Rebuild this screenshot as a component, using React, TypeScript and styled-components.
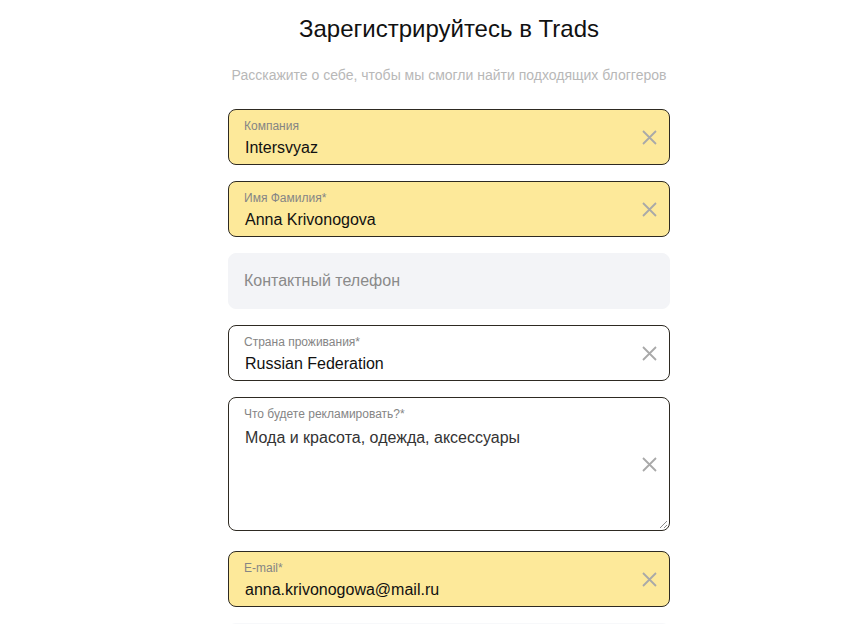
import React from 'react';
import styled, { createGlobalStyle } from 'styled-components';

const GlobalStyle = createGlobalStyle`
  body {
    margin: 0;
    background: #ffffff;
    font-family: 'Liberation Sans', Arial, sans-serif;
  }
`;

const Page = styled.div`
  width: 442px;
  margin-left: 228px;
  padding-top: 15px;
  display: flex;
  flex-direction: column;
  align-items: stretch;
`;

const Title = styled.h1`
  margin: 0;
  font-size: 24px;
  line-height: 28px;
  font-weight: 400;
  color: #111;
  text-align: center;
`;

const Subtitle = styled.p`
  margin: 22px 0 24px;
  font-size: 14px;
  line-height: 20px;
  color: #b8b8b8;
  text-align: center;
`;

const Form = styled.div`
  display: flex;
  flex-direction: column;
  gap: 16px;
`;

const Field = styled.div<{ $filled?: boolean; $empty?: boolean; $tall?: boolean }>`
  position: relative;
  box-sizing: border-box;
  height: ${({ $tall }) => ($tall ? '134px' : '56px')};
  margin-bottom: ${({ $tall }) => ($tall ? '4px' : '0')};
  border-radius: 8px;
  border: 1px solid ${({ $empty }) => ($empty ? '#f3f4f7' : '#2e2a22')};
  background: ${({ $filled, $empty }) =>
    $filled ? '#fde99a' : $empty ? '#f3f4f7' : '#ffffff'};
  padding: 9px 50px 0 15px;
  display: flex;
  flex-direction: column;
  justify-content: ${({ $empty }) => ($empty ? 'center' : 'flex-start')};
`;

const Label = styled.span`
  font-size: 12px;
  line-height: 14px;
  color: #858585;
`;

const Value = styled.span<{ $soft?: boolean; $gap?: number }>`
  margin-top: ${({ $gap }) => $gap ?? 5}px;
  padding-left: 1px;
  font-size: 16px;
  line-height: 20px;
  color: ${({ $soft }) => ($soft ? '#333' : '#111')};
`;

const Placeholder = styled.span`
  margin-top: -9px;
  font-size: 16px;
  line-height: 20px;
  color: #8a8a8a;
`;

const Clear = styled.button`
  position: absolute;
  right: 12px;
  top: 50%;
  transform: translateY(-50%);
  width: 16px;
  height: 16px;
  padding: 0;
  border: none;
  background: none;
  display: flex;
  align-items: center;
  justify-content: center;
  cursor: pointer;
`;

const Grip = styled.svg`
  position: absolute;
  right: 1px;
  bottom: 1px;
`;

const NextField = styled.div`
  margin-top: 16px;
  height: 20px;
  border-radius: 8px 8px 0 0;
  background: #f7f8fa;
`;

const ClearIcon = () => (
  <Clear aria-label="Очистить">
    <svg width="15" height="15" viewBox="0 0 15 15">
      <path d="M1 1L14 14M14 1L1 14" stroke="#a9a9a9" strokeWidth="1.8" />
    </svg>
  </Clear>
);

const App: React.FC = () => (
  <>
    <GlobalStyle />
    <Page>
      <Title>Зарегистрируйтесь в Trads</Title>
      <Subtitle>Расскажите о себе, чтобы мы смогли найти подходящих блоггеров</Subtitle>
      <Form>
        <Field $filled>
          <Label>Компания</Label>
          <Value>Intersvyaz</Value>
          <ClearIcon />
        </Field>
        <Field $filled>
          <Label>Имя Фамилия*</Label>
          <Value>Anna Krivonogova</Value>
          <ClearIcon />
        </Field>
        <Field $empty>
          <Placeholder>Контактный телефон</Placeholder>
        </Field>
        <Field>
          <Label>Страна проживания*</Label>
          <Value>Russian Federation</Value>
          <ClearIcon />
        </Field>
        <Field $tall>
          <Label>Что будете рекламировать?*</Label>
          <Value $soft $gap={7}>Мода и красота, одежда, аксессуары</Value>
          <ClearIcon />
          <Grip width="10" height="10" viewBox="0 0 10 10">
            <path d="M9 2L2 9M9 6L6 9" stroke="#8a8a8a" strokeWidth="1" />
          </Grip>
        </Field>
        <Field $filled>
          <Label>E-mail*</Label>
          <Value>anna.krivonogowa@mail.ru</Value>
          <ClearIcon />
        </Field>
      </Form>
      <NextField />
    </Page>
  </>
);

export default App;
